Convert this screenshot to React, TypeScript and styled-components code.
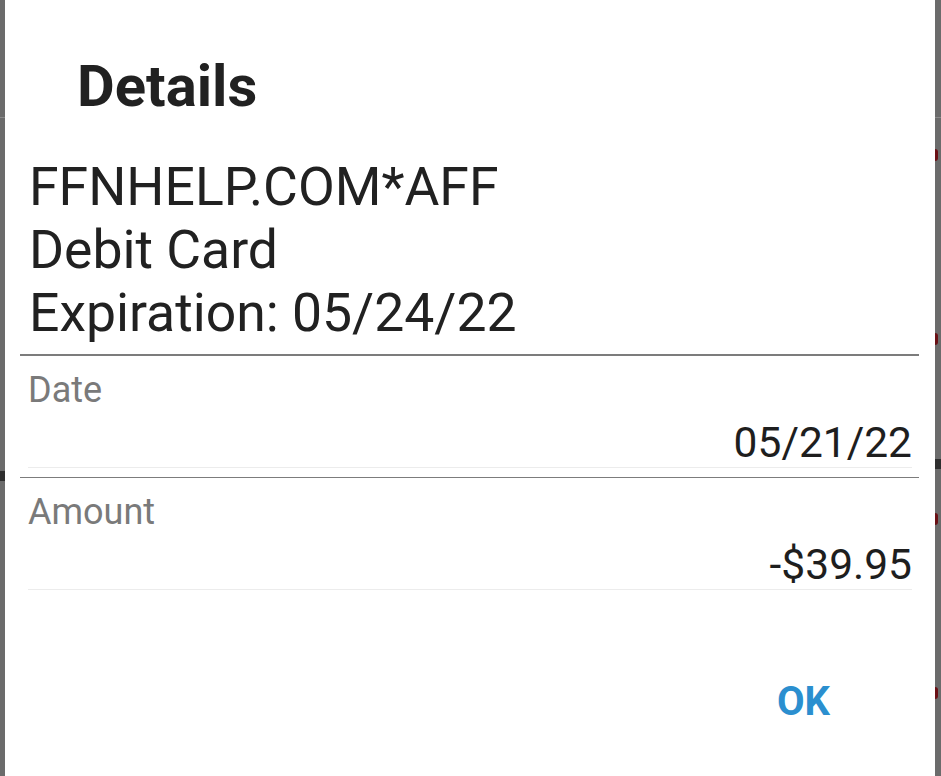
import React from "react";
import styled, { createGlobalStyle } from "styled-components";

const Global = createGlobalStyle`
  html, body { margin: 0; padding: 0; background: #6b6b6b; }
  body { font-family: Roboto, "Liberation Sans", sans-serif; }
`;

const Screen = styled.div`
  display: flex;
  width: 941px;
  height: 776px;
  overflow: hidden;
  background: #6b6b6b;
`;

const Strip = styled.div<{ $w: number }>`
  width: ${(p) => p.$w}px;
  flex: none;
  display: flex;
  flex-direction: column;
`;

const StripBand = styled.div<{ $h: number; $c: string }>`
  height: ${(p) => p.$h}px;
  background: ${(p) => p.$c};
  flex: none;
`;

const RedDot = styled.div`
  width: 3px;
  height: 12px;
  flex: none;
  background: #6a0f14;
  border-radius: 0 6px 6px 0;
`;

const Dialog = styled.div`
  width: 930px;
  flex: none;
  background: #ffffff;
  display: flex;
  flex-direction: column;
`;

const Title = styled.h1`
  margin: 52px 0 0 72px;
  font-family: Roboto, sans-serif;
  font-weight: 700;
  font-size: 58px;
  line-height: 69px;
  color: #212121;
`;

const Message = styled.div`
  margin: 34px 0 0 24px;
  font-family: Roboto, sans-serif;
  font-size: 53.5px;
  line-height: 63px;
  color: #212121;
`;

const Divider = styled.div<{ $top: number }>`
  margin: ${(p) => p.$top}px 16px 0 15px;
  height: 1.5px;
  background: #7c7c7c;
`;

const Field = styled.div`
  margin: 0 23px 0 23px;
  display: flex;
  flex-direction: column;
  border-bottom: 1.5px solid #ececec;
`;

const Label = styled.div`
  margin-top: 13px;
  font-family: Roboto, sans-serif;
  font-size: 36px;
  line-height: 42px;
  color: #7a7a7a;
`;

const Value = styled.div`
  margin-top: 8px;
  text-align: right;
  font-family: Roboto, sans-serif;
  font-size: 42.5px;
  line-height: 48px;
  color: #1e1e1e;
`;

const Actions = styled.div`
  display: flex;
  justify-content: flex-end;
  padding: 88px 105px 0 0;
`;

const OkButton = styled.button`
  border: none;
  background: none;
  padding: 0;
  font-family: Roboto, sans-serif;
  font-weight: 700;
  font-size: 40px;
  line-height: 48px;
  color: #2b8fcf;
`;

export default function App() {
  return (
    <>
      <Global />
      <Screen>
        <Strip $w={5}>
          <StripBand $h={117} $c="#6b6b6b" />
          <StripBand $h={1} $c="#8a8a8a" />
          <StripBand $h={353} $c="#6b6b6b" />
          <StripBand $h={10} $c="#2e2e2e" />
          <StripBand $h={295} $c="#6b6b6b" />
        </Strip>
        <Dialog>
          <Title>Details</Title>
          <Message>
            FFNHELP.COM*AFF
            <br />
            Debit Card
            <br />
            Expiration: 05/24/22
          </Message>
          <Divider $top={10} />
          <Field>
            <Label>Date</Label>
            <Value>05/21/22</Value>
          </Field>
          <Divider $top={9} />
          <Field>
            <Label>Amount</Label>
            <Value>-$39.95</Value>
          </Field>
          <Actions>
            <OkButton>OK</OkButton>
          </Actions>
        </Dialog>
        <Strip $w={6}>
          <StripBand $h={117} $c="#6b6b6b" />
          <StripBand $h={1} $c="#8a8a8a" />
          <StripBand $h={31} $c="#6b6b6b" />
          <RedDot />
          <StripBand $h={172} $c="#6b6b6b" />
          <RedDot />
          <StripBand $h={114} $c="#6b6b6b" />
          <StripBand $h={10} $c="#2e2e2e" />
          <StripBand $h={44} $c="#6b6b6b" />
          <RedDot />
          <StripBand $h={162} $c="#6b6b6b" />
          <RedDot />
        </Strip>
      </Screen>
    </>
  );
}
